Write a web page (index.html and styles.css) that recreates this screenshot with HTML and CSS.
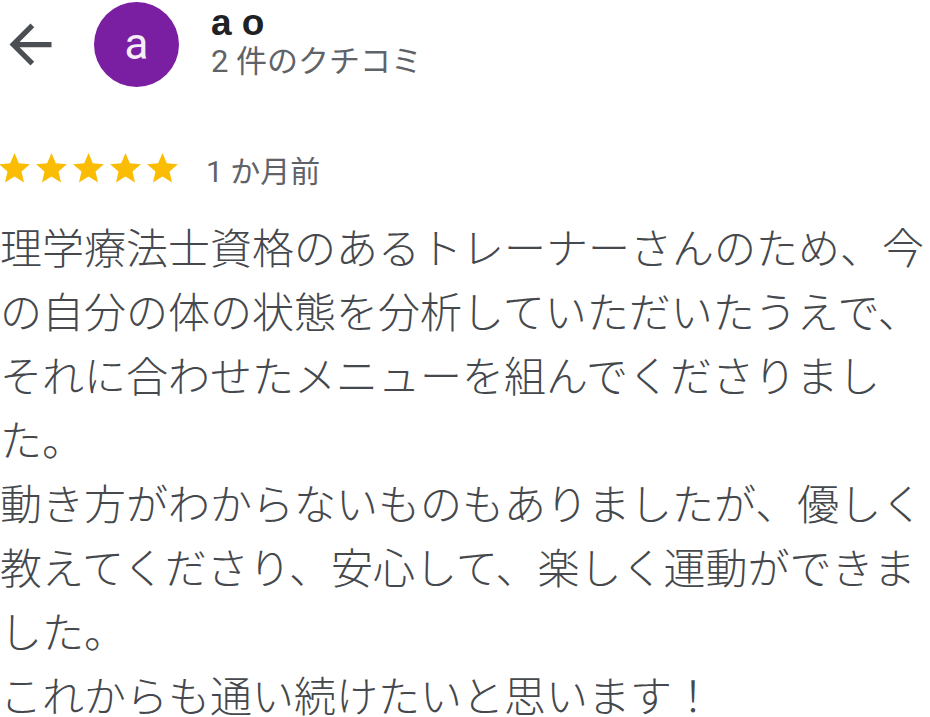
FILE: index.html
```html
<!doctype html>
<html lang="ja">
<head>
	<meta charset="UTF-8" />
	<title>クチコミ</title>
	<link rel="stylesheet" href="styles.css">
</head>
<body>

<div class="header">
	<div class="back">
		<svg width="63" height="63" viewBox="0 0 24 24"><path fill="#4b4e52" d="M20 11H7.83l5.59-5.59L12 4l-8 8 8 8 1.41-1.41L7.83 13H20v-2z"/></svg>
	</div>
	<div class="avatar">a</div>
	<div class="who">
		<div class="name">a o</div>
		<div class="count">2 件のクチコミ</div>
	</div>
</div>

<div class="rating">
	<div class="stars">
		<svg width="37" height="37" viewBox="0 0 24 24"><path d="M12 17.27L18.18 21l-1.64-7.03L22 9.24l-7.19-.61L12 2 9.19 8.63 2 9.24l5.46 4.73L5.82 21z"/></svg>
		<svg width="37" height="37" viewBox="0 0 24 24"><path d="M12 17.27L18.18 21l-1.64-7.03L22 9.24l-7.19-.61L12 2 9.19 8.63 2 9.24l5.46 4.73L5.82 21z"/></svg>
		<svg width="37" height="37" viewBox="0 0 24 24"><path d="M12 17.27L18.18 21l-1.64-7.03L22 9.24l-7.19-.61L12 2 9.19 8.63 2 9.24l5.46 4.73L5.82 21z"/></svg>
		<svg width="37" height="37" viewBox="0 0 24 24"><path d="M12 17.27L18.18 21l-1.64-7.03L22 9.24l-7.19-.61L12 2 9.19 8.63 2 9.24l5.46 4.73L5.82 21z"/></svg>
		<svg width="37" height="37" viewBox="0 0 24 24"><path d="M12 17.27L18.18 21l-1.64-7.03L22 9.24l-7.19-.61L12 2 9.19 8.63 2 9.24l5.46 4.73L5.82 21z"/></svg>
	</div>
	<span class="when">1 か月前</span>
</div>

<p class="review">理学療法士資格のあるトレーナーさんのため、今の自分の体の状態を分析していただいたうえで、それに合わせたメニューを組んでくださりました。<br>動き方がわからないものもありましたが、優しく教えてくださり、安心して、楽しく運動ができました。<br>これからも通い続けたいと思います！</p>

</body>
</html>
```

FILE: styles.css
```css
body{
	margin: 0;
	padding: 0;
	width: 930px;
	overflow: hidden;
	background: #fff;
	font-family: Roboto, "Noto Sans CJK JP", sans-serif;
}
.header{
	display: flex;
	align-items: center;
	padding-top: 2px;
	height: 85px;
}
.back{
	width: 63px;
	height: 63px;
	margin-left: -1px;
}
.back svg{display: block;}
.avatar{
	width: 85px;
	height: 85px;
	margin-left: 32px;
	border-radius: 50%;
	background: #7b1fa2;
	color: #f5eef8;
	font-size: 44px;
	line-height: 84px;
	text-align: center;
}
.who{
	margin-left: 32px;
	margin-top: -4px;
}
.name{
	font-family: "Liberation Sans", Arial, sans-serif;
	font-weight: bold;
	font-size: 37px;
	line-height: 38px;
	color: #202124;
}
.count{
	font-size: 31px;
	line-height: 40px;
	color: #5f6368;
}
.rating{
	display: flex;
	align-items: center;
	margin-top: 63px;
	height: 37px;
}
.stars{
	display: flex;
	margin-left: -4px;
}
.stars svg{
	display: block;
	fill: #fbbc04;
}
.when{
	margin-left: 25px;
	font-size: 30px;
	color: #5f6368;
}
.review{
	margin: 27px 0 0 0;
	font-family: "Noto Sans CJK JP", sans-serif;
	font-weight: 300;
	font-size: 42px;
	line-height: 64px;
	color: #45484c;
}
```
